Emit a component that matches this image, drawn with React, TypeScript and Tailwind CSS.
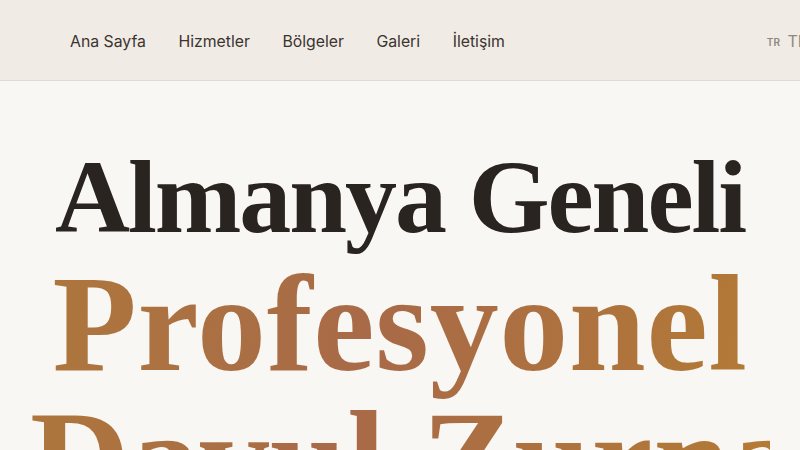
import React from 'react';

const navItems = ['Ana Sayfa', 'Hizmetler', 'Bölgeler', 'Galeri', 'İletişim'];

const App: React.FC = () => {
  return (
    <div className="w-[800px] h-[450px] overflow-hidden bg-[#f9f7f3] font-['Inter',sans-serif]">
      <header className="h-[81px] bg-[#f1ebe5] border-b border-[#e2dad2] flex items-center pl-[70px]">
        <nav className="flex items-center gap-[32.5px] text-[15.8px] text-[#3a3430] mt-[3px]">
          {navItems.map((item) => (
            <a key={item} href="#" className="whitespace-nowrap">
              {item}
            </a>
          ))}
        </nav>
        <div className="ml-auto -mr-[8px] shrink-0 flex items-center gap-[7px] whitespace-nowrap mt-[2px]">
          <span className="text-[10px] font-semibold tracking-wide text-[#8c8782] mt-[3px]">TR</span>
          <span className="text-[16px] text-[#8c8782]">TR</span>
        </div>
      </header>

      <section className="px-[30px] pt-[46px] text-center font-['Liberation_Serif',serif] font-bold">
        <h1 className="text-[104px] leading-[140px] tracking-[-0.02em] text-[#2a2420] whitespace-nowrap">
          Almanya Geneli
        </h1>
        <h2 className="-mt-[11px] text-[138px] leading-[136px] tracking-[0.005em] whitespace-nowrap bg-[linear-gradient(100deg,#ae773c_0%,#a86a48_45%,#b47b34_100%)] bg-clip-text text-transparent">
          Profesyonel
          <br />
          Davul Zurna
        </h2>
      </section>
    </div>
  );
};

export default App;
